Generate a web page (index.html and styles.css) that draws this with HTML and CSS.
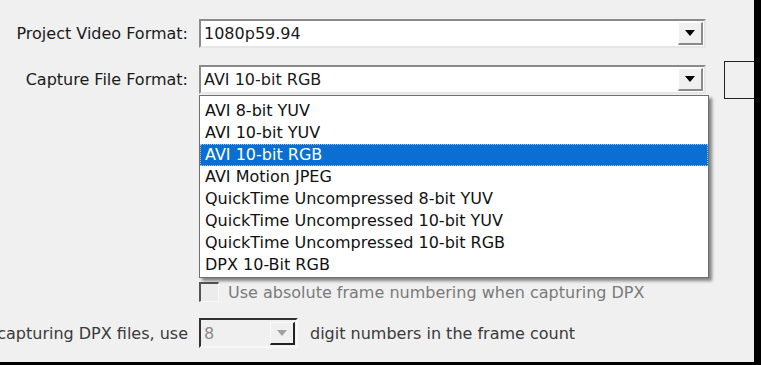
FILE: index.html
```html
<!DOCTYPE html>
<html lang="en">
<head>
  <meta charset="UTF-8" />
  <title>Capture Settings</title>
  <link rel="stylesheet" href="styles.css">
</head>
<body>
  <div class="dialog">
    <div class="row">
      <span class="label">Project Video Format:</span>
      <div class="combo wide">
        <span class="value">1080p59.94</span>
        <span class="btn"><span class="arrow"></span></span>
      </div>
    </div>

    <div class="row second">
      <span class="label">Capture File Format:</span>
      <div class="combo wide open">
        <span class="value">AVI 10-bit RGB</span>
        <span class="btn"><span class="arrow"></span></span>
        <!-- open drop-down list -->
        <ul class="list">
          <li>AVI 8-bit YUV</li>
          <li>AVI 10-bit YUV</li>
          <li class="sel">AVI 10-bit RGB</li>
          <li>AVI Motion JPEG</li>
          <li>QuickTime Uncompressed 8-bit YUV</li>
          <li>QuickTime Uncompressed 10-bit YUV</li>
          <li>QuickTime Uncompressed 10-bit RGB</li>
          <li>DPX 10-Bit RGB</li>
        </ul>
      </div>
      <div class="side-btn"></div>
    </div>

    <div class="row check">
      <span class="label"></span>
      <span class="box"></span>
      <span class="dim">Use absolute frame numbering when capturing DPX</span>
    </div>

    <div class="row last">
      <span class="label cut">capturing DPX files, use</span>
      <div class="combo small disabled">
        <span class="value">8</span>
        <span class="btn"><span class="arrow"></span></span>
      </div>
      <span class="after">digit numbers in the frame count</span>
    </div>
  </div>
</body>
</html>
```

FILE: styles.css
```css
body {
  margin: 0;
  background-color: black;
  font-family: "DejaVu Sans", sans-serif;
  font-size: 16px;
  color: #1a1a1a;
}

.dialog {
  width: 754px;
  height: 362px;
  background-color: #f0f0f0;
  overflow: hidden;
  display: flex;
  flex-direction: column;
  padding-top: 19px;
  box-sizing: border-box;
}

.row {
  display: flex;
  align-items: center;
  position: relative;
}

.row.second {
  margin-top: 17px;
}

.row.check {
  height: 20px;
  margin-top: 188px;
}

.row.last {
  margin-top: 16px;
}

.label {
  width: 188px;
  margin-right: 11px;
  text-align: right;
  white-space: nowrap;
  flex-shrink: 0;
}

.label.cut {
  width: 198px;
  margin-left: -10px;
  margin-right: 11px;
  color: #3a3a3a;
}

.combo {
  position: relative;
  display: flex;
  align-items: center;
  height: 29px;
  box-sizing: border-box;
  background-color: white;
  border-top: 2px solid #8a8a8a;
  border-left: 2px solid #8a8a8a;
  border-bottom: 2px solid #e6e6e6;
  border-right: 2px solid #e6e6e6;
}

.combo.wide {
  width: 507px;
}

.combo .value {
  flex: 1;
  padding-left: 3px;
  white-space: nowrap;
}

.btn {
  width: 25px;
  height: 23px;
  margin-right: 1px;
  box-sizing: border-box;
  background-color: #f0f0f0;
  border-top: 1px solid #fdfdfd;
  border-left: 1px solid #fdfdfd;
  border-bottom: 2px solid #8a8a8a;
  border-right: 2px solid #8a8a8a;
  display: flex;
  align-items: center;
  justify-content: center;
}

.arrow {
  width: 0;
  height: 0;
  border-left: 5px solid transparent;
  border-right: 5px solid transparent;
  border-top: 6px solid black;
}

.side-btn {
  position: absolute;
  left: 724px;
  top: -4px;
  width: 40px;
  height: 38px;
  box-sizing: border-box;
  border: 1px solid #222;
  background-color: #f0f0f0;
}

.list {
  position: absolute;
  left: -2px;
  top: 28px;
  width: 508px;
  margin: 0;
  padding: 4px 0 1px;
  list-style: none;
  background-color: white;
  border: 1px solid #6e6e6e;
  box-shadow: 3px 3px 3px rgba(0, 0, 0, 0.45);
  z-index: 2;
}

.list li {
  height: 22px;
  line-height: 22px;
  padding-left: 5px;
  white-space: nowrap;
  color: #111;
}

.list li.sel {
  background-color: #0a6fd1;
  color: white;
  outline: 1px dotted #9cc4ee;
  outline-offset: -1px;
}

.box {
  width: 20px;
  height: 20px;
  box-sizing: border-box;
  border-top: 2px solid #555;
  border-left: 2px solid #555;
  border-bottom: 1px solid #f8f8f8;
  border-right: 1px solid #f8f8f8;
  background-color: #ececec;
  margin-right: 9px;
}

.dim {
  color: #7a7a7a;
  white-space: nowrap;
}

.combo.small {
  width: 99px;
  height: 30px;
  background-color: #f0f0f0;
  border-top: 2px solid #333;
  border-left: 2px solid #333;
  border-bottom: 2px solid #f8f8f8;
  border-right: 2px solid #f8f8f8;
}

.combo.disabled .value {
  color: #8a8a8a;
}

.combo.disabled .btn {
  border-top: 1px solid #fafafa;
  border-left: 1px solid #fafafa;
  border-bottom: 2px solid #222;
  border-right: 2px solid #222;
}

.combo.disabled .arrow {
  border-top-color: #a0a0a0;
}

.after {
  margin-left: 12px;
  color: #3a3a3a;
  white-space: nowrap;
}
```
